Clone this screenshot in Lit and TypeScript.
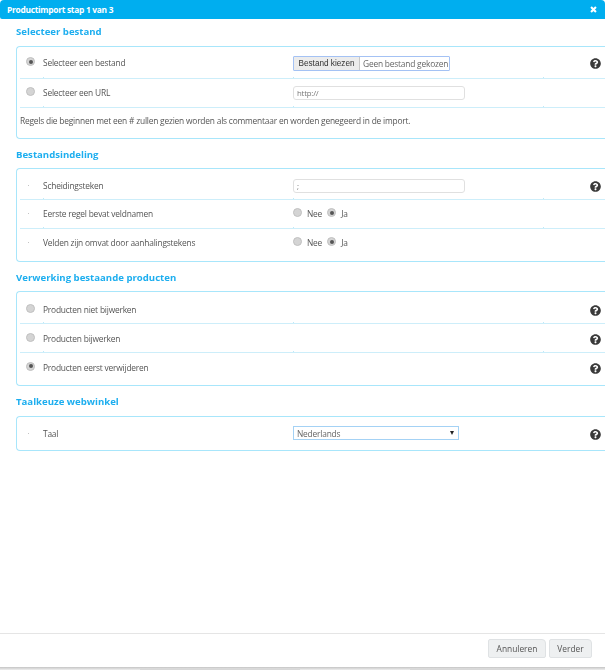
import { LitElement, html, css } from "lit";
import { customElement } from "lit/decorators.js";

const help = html`<svg class="help" viewBox="0 0 512 512"><path d="M504 256c0 136.997-111.043 248-248 248S8 392.997 8 256C8 119.083 119.043 8 256 8s248 111.083 248 248zM262.655 90c-54.497 0-89.255 22.957-116.549 63.758-3.536 5.286-2.353 12.415 2.715 16.258l34.699 26.31c5.205 3.947 12.621 3.008 16.665-2.122 17.864-22.658 30.113-35.797 57.303-35.797 20.429 0 45.698 13.148 45.698 32.958 0 14.976-12.363 22.667-32.534 33.976C247.128 238.528 216 254.941 216 296v4c0 6.627 5.373 12 12 12h56c6.627 0 12-5.373 12-12v-1.333c0-28.462 83.186-29.647 83.186-106.667 0-58.002-60.165-102-116.531-102zM256 338c-25.365 0-46 20.635-46 46 0 25.364 20.635 46 46 46s46-20.636 46-46c0-25.365-20.635-46-46-46z"/></svg>`;

const radio = (on = false) => html`<span class="radio ${on ? "on" : ""}"></span>`;
const dot = html`<span class="dot"></span>`;
const yesNo = html`<div class="yn">${radio()}<span class="nee">Nee</span>${radio(true)}<span>Ja</span></div>`;

@customElement("app-root")
export class AppRoot extends LitElement {
  static styles = css`
    :host { display: block; width: 605px; height: 670px; overflow: hidden; background: #fff;
      font-family: "Open Sans", "Liberation Sans", sans-serif; font-size: 8.4px; letter-spacing: -0.2px; color: #555; }
    .page { display: flex; flex-direction: column; height: 670px; filter: blur(0.3px); }
    header { height: 19px; background: #00aeef; border-radius: 4px 4px 0 2px; color: #fff; font-weight: 700; font-size: 8.4px; letter-spacing: -0.28px;
      display: flex; align-items: center; justify-content: space-between; padding: 0 8px 0 7px; flex: none; }
    .close { width: 7px; height: 7px; }
    main { flex: 1; padding-left: 16px; }
    h2 { margin: 0; font-size: 9.6px; letter-spacing: 0; line-height: 14px; font-weight: 700; color: #1daeef; }
    .h1 { margin-top: 6px; }
    .h2 { margin-top: 9px; }
    .box { margin-top: 6px; border: 1px solid #a8e6fb; border-right: none; border-radius: 4px 0 0 4px; padding-left: 3px; }
    .box.gap { margin-top: 7px; }
    .row { display: grid; grid-template-columns: 23px 250px 250px 1fr; align-items: center; box-sizing: border-box; height: 29px;
      border-bottom: 1px solid #cdeefa;
      background-image: linear-gradient(#bfe9f8, #bfe9f8), linear-gradient(#bfe9f8, #bfe9f8), linear-gradient(#bfe9f8, #bfe9f8);
      background-size: 1px 1px; background-repeat: no-repeat; background-position: 23px 100%, 273px 100%, 523px 100%; }
    .row.sm { padding-bottom: 1px; }
    .row.h31 { height: 31px; }
    .row.h32 { height: 32px; }
    .row.top { padding-top: 3px; }
    .row.end { border-bottom: none; background-image: none; height: 32px; padding-bottom: 4px; }
    .row.up { padding-bottom: 5px; }
    .row.single { height: 33px; padding-bottom: 1px; }
    .c0 { display: flex; padding-left: 6px; }
    .c3 { display: flex; justify-content: flex-end; padding-right: 4px; }
    .help { width: 11px; height: 11px; fill: #3a3a3a; display: block; position: relative; top: 1px; }
    .radio { box-sizing: border-box; width: 9px; height: 9px; border-radius: 50%; background: #d4d4d4; border: 1px solid #c0c0c0; display: block; flex: none; position: relative; top: -1px; }
    .radio.on::after { content: ""; position: absolute; left: 1.5px; top: 1.5px; width: 4px; height: 4px; border-radius: 50%; background: #555; }
    .dot { width: 1px; height: 1px; background: #c4c4c4; margin-left: 2px; display: block; }
    .yn { display: flex; align-items: center; }
    .yn .radio { margin-right: 5px; top: -1px; }
    .nee { margin-right: 5px; }
    .input { box-sizing: border-box; width: 172px; height: 14px; border: 1px solid #e0e0e0; border-radius: 3px; padding-left: 3px; font-size: 7.8px; line-height: 12px; color: #777; background: #fff; }
    .file { display: flex; width: 157px; height: 15px; margin-top: 1px; box-sizing: border-box; border: 1px solid #a4c2f4; border-radius: 1px; align-items: center; }
    .file .btn { box-sizing: border-box; width: 66px; background: #ececec; border-right: 1px solid #c8c8c8; height: 100%; display: flex; align-items: center; justify-content: center; color: #333; font-family: "Liberation Sans", sans-serif; font-size: 8.2px; letter-spacing: 0; white-space: nowrap; }
    .file .name { padding-left: 3px; color: #666; white-space: nowrap; }
    .select { box-sizing: border-box; width: 166px; height: 14px; border: 1px solid #a4d2f5; display: flex; align-items: center; justify-content: space-between; padding: 0 4px 0 3px; color: #666; }
    .arrow { width: 0; height: 0; border-left: 2.5px solid transparent; border-right: 2.5px solid transparent; border-top: 4px solid #222; }
    .note { box-sizing: border-box; height: 30px; display: flex; align-items: center; padding-bottom: 5px; }
    footer { flex: none; height: 37px; border-top: 1px solid #e5e5e5; box-sizing: border-box; padding-top: 5px; display: flex; flex-direction: column; }
    .acts { display: flex; justify-content: flex-end; gap: 3px; padding-right: 13px; }
    .edge { margin-top: auto; height: 3px; background:
      linear-gradient(#d8d8d8, #d8d8d8) 140px 2px / 160px 1px no-repeat,
      linear-gradient(#d8d8d8, #d8d8d8) 410px 2px / 160px 1px no-repeat,
      linear-gradient(#c4c4c4, #efefef); }
    .b { height: 19px; box-sizing: border-box; border-radius: 2px 4px 2px 2px; background: #eef0f1; border: 1px solid #dfe2e4; display: flex; align-items: center; justify-content: center; color: #555; letter-spacing: 0; }
    .b.a { width: 58px; }
    .b.v { width: 43px; }
  `;

  render() {
    return html`<div class="page">
      <header><span>Productimport stap 1 van 3</span>
        <svg class="close" viewBox="0 0 10 10"><path d="M1.5 1.5 8.5 8.5M8.5 1.5 1.5 8.5" stroke="#fff" stroke-width="3" fill="none"/></svg>
      </header>
      <main>
        <h2 class="h1">Selecteer bestand</h2>
        <section class="box gap">
          <div class="row h32"><div class="c0">${radio(true)}</div><div>Selecteer een bestand</div>
            <div><div class="file"><span class="btn">Bestand kiezen</span><span class="name">Geen bestand gekozen</span></div></div>
            <div class="c3">${help}</div></div>
          <div class="row sm"><div class="c0">${radio()}</div><div>Selecteer een URL</div><div><div class="input">http://</div></div><div></div></div>
          <div class="note">Regels die beginnen met een # zullen gezien worden als commentaar en worden genegeerd in de import.</div>
        </section>
        <h2 class="h2">Bestandsindeling</h2>
        <section class="box">
          <div class="row h31 top"><div class="c0">${dot}</div><div>Scheidingsteken</div><div><div class="input">;</div></div><div class="c3">${help}</div></div>
          <div class="row sm"><div class="c0">${dot}</div><div>Eerste regel bevat veldnamen</div><div>${yesNo}</div><div></div></div>
          <div class="row end up"><div class="c0">${dot}</div><div>Velden zijn omvat door aanhalingstekens</div><div>${yesNo}</div><div></div></div>
        </section>
        <h2 class="h2">Verwerking bestaande producten</h2>
        <section class="box">
          <div class="row h32 top"><div class="c0">${radio()}</div><div>Producten niet bijwerken</div><div></div><div class="c3">${help}</div></div>
          <div class="row"><div class="c0">${radio()}</div><div>Producten bijwerken</div><div></div><div class="c3">${help}</div></div>
          <div class="row end"><div class="c0">${radio(true)}</div><div>Producten eerst verwijderen</div><div></div><div class="c3">${help}</div></div>
        </section>
        <h2 class="h2">Taalkeuze webwinkel</h2>
        <section class="box gap">
          <div class="row end single"><div class="c0">${dot}</div><div>Taal</div><div><div class="select"><span>Nederlands</span><span class="arrow"></span></div></div><div class="c3">${help}</div></div>
        </section>
      </main>
      <footer><div class="acts"><div class="b a">Annuleren</div><div class="b v">Verder</div></div><div class="edge"></div></footer>
    </div>`;
  }
}
